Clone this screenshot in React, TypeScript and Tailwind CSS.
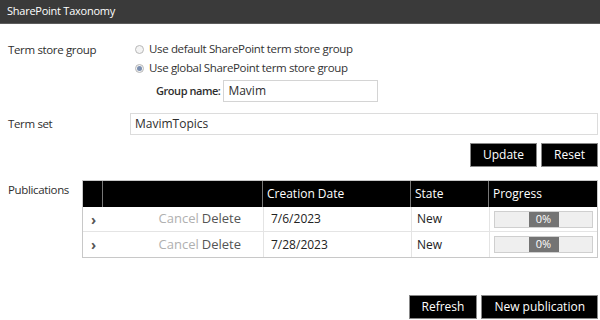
import React from "react";

type Publication = { date: string; state: string; progress: number };

const publications: Publication[] = [
  { date: "7/6/2023", state: "New", progress: 0 },
  { date: "7/28/2023", state: "New", progress: 0 },
];

function Radio({ checked, label }: { checked?: boolean; label: string }) {
  return (
    <label className="flex h-[18px] items-center gap-[5px] whitespace-nowrap text-[#333]">
      <span className="flex h-[9px] w-[9px] items-center justify-center rounded-full border border-[#b8b8b8] bg-[#f4f4f4]">
        {checked && <span className="h-[5px] w-[5px] rounded-full bg-[#7b8fb0]" />}
      </span>
      {label}
    </label>
  );
}

function BlackButton({ children }: { children: React.ReactNode }) {
  return (
    <button className="h-[24px] whitespace-nowrap border border-[#888] bg-black px-[12px] text-[12px] tracking-normal text-white">
      {children}
    </button>
  );
}

export default function App() {
  return (
    <div
      className="relative h-[320px] w-[600px] overflow-hidden bg-white text-[11.5px] tracking-[-0.35px] text-[#2e2e2e]"
      style={{ fontFamily: '"Open Sans", "Noto Sans", sans-serif' }}
    >
      <div className="flex h-[24px] items-center border-b border-[#5c5c5c] bg-[#3a3a3a] pl-[7px] text-[11px] tracking-[-0.25px] text-white">
        SharePoint Taxonomy
      </div>

      <div className="pl-[8px] pr-[2px]">
        {/* term store group */}
        <div className="mt-[16px] flex">
          <div className="w-[122px] pt-[1px]">Term store group</div>
          <div className="flex flex-col pl-[5px]">
            <Radio label="Use default SharePoint term store group" />
            <div className="mt-[1px]">
              <Radio checked label="Use global SharePoint term store group" />
            </div>
            <div className="mt-[3px] flex items-center gap-[3px] pl-[21px]">
              <span className="whitespace-nowrap text-[11px] font-semibold tracking-[-0.45px]">Group name:</span>
              <div className="flex h-[22px] w-[155px] items-center border border-[#d4d4d4] px-[4px] text-[12px] tracking-normal">
                Mavim
              </div>
            </div>
          </div>
        </div>

        {/* term set */}
        <div className="mt-[11px] flex items-center">
          <div className="w-[122px]">Term set</div>
          <div className="flex h-[22px] flex-1 items-center border border-[#dcdcdc] px-[4px] text-[12px] tracking-normal">
            MavimTopics
          </div>
        </div>

        <div className="mt-[8px] flex justify-end gap-[4px]">
          <BlackButton>Update</BlackButton>
          <BlackButton>Reset</BlackButton>
        </div>

        {/* publications */}
        <div className="mt-[13px] flex">
          <div className="w-[74px] pt-[1px]">Publications</div>
          <div className="flex-1 border border-[#c8c8c8] text-[12px] tracking-normal">
            <div className="flex h-[26px] bg-black text-white">
              <div className="w-[20px] border-r border-[#777]" />
              <div className="w-[160px] border-r border-[#777]" />
              <div className="flex w-[148px] items-center border-r border-[#777] pl-[4px]">Creation Date</div>
              <div className="flex w-[78px] items-center border-r border-[#777] pl-[4px]">State</div>
              <div className="flex flex-1 items-center pl-[4px]">Progress</div>
            </div>
            {publications.map((p, i) => (
              <div key={i} className={`flex h-[25px] ${i === 0 ? "border-b border-[#e4e4e4]" : ""}`}>
                <div className="flex w-[20px] items-center pl-[8px] text-[14px] font-bold text-[#555]">›</div>
                <div className="flex w-[160px] items-center justify-end pr-[22px] text-[13px]">
                  <span className="text-[#b0b0b0]">Cancel</span>
                  <span className="ml-[3px] text-[#555]">Delete</span>
                </div>
                <div className="flex w-[148px] items-center border-l border-[#e4e4e4] pl-[7px] text-[#222]">
                  {p.date}
                </div>
                <div className="flex w-[78px] items-center border-l border-[#e4e4e4] pl-[5px] text-[#222]">
                  {p.state}
                </div>
                <div className="flex flex-1 items-center border-l border-[#e4e4e4] px-[4px]">
                  <div className="flex h-[17px] w-full items-center justify-center border border-[#cfcfcf] bg-[#efefef]">
                    <span className="flex h-[15px] w-[30px] items-center justify-center bg-[#747474] text-[11px] text-white">
                      {p.progress}%
                    </span>
                  </div>
                </div>
              </div>
            ))}
          </div>
        </div>

        <div className="mt-[37px] flex justify-end gap-[4px]">
          <BlackButton>Refresh</BlackButton>
          <BlackButton>New publication</BlackButton>
        </div>
      </div>
    </div>
  );
}
